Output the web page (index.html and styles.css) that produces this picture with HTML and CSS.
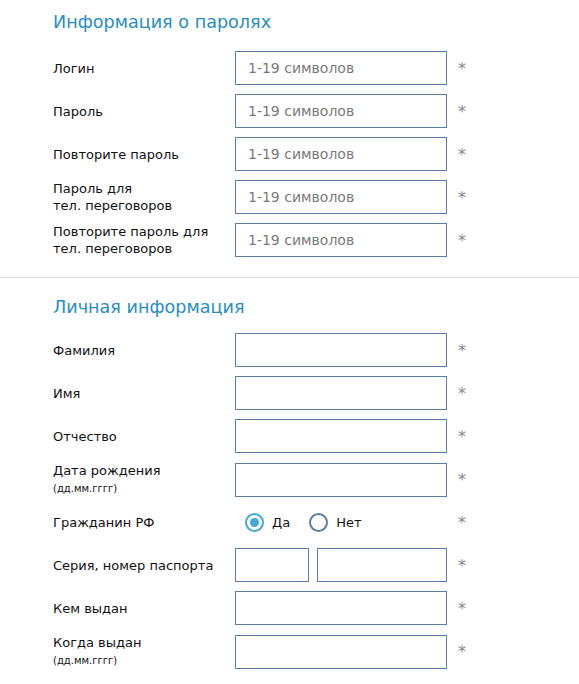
FILE: index.html
```html
<!DOCTYPE html>
<html lang="ru">
<head>
<meta charset="utf-8">
<link rel="stylesheet" href="styles.css">
</head>
<body>
<section class="section first">
  <h2 class="title">Информация о паролях</h2>
  <div class="rows">
    <div class="row"><label class="label">Логин</label><div class="field"><input class="input" placeholder="1-19 символов"></div><span class="req">*</span></div>
    <div class="row"><label class="label">Пароль</label><div class="field"><input class="input" placeholder="1-19 символов"></div><span class="req">*</span></div>
    <div class="row"><label class="label">Повторите пароль</label><div class="field"><input class="input" placeholder="1-19 символов"></div><span class="req">*</span></div>
    <div class="row"><label class="label">Пароль для<br>тел. переговоров</label><div class="field"><input class="input" placeholder="1-19 символов"></div><span class="req">*</span></div>
    <div class="row"><label class="label">Повторите пароль для<br>тел. переговоров</label><div class="field"><input class="input" placeholder="1-19 символов"></div><span class="req">*</span></div>
  </div>
</section>
<hr class="divider">
<section class="section second">
  <h2 class="title">Личная информация</h2>
  <div class="rows">
    <div class="row"><label class="label">Фамилия</label><div class="field"><input class="input"></div><span class="req">*</span></div>
    <div class="row"><label class="label">Имя</label><div class="field"><input class="input"></div><span class="req">*</span></div>
    <div class="row"><label class="label">Отчество</label><div class="field"><input class="input"></div><span class="req">*</span></div>
    <div class="row"><label class="label">Дата рождения<br><span class="hint">(дд.мм.гггг)</span></label><div class="field"><input class="input"></div><span class="req">*</span></div>
    <div class="row"><label class="label">Гражданин РФ</label>
      <div class="field radios">
        <span class="radio"><span class="dot checked"></span>Да</span>
        <span class="radio"><span class="dot"></span>Нет</span>
      </div><span class="req">*</span></div>
    <div class="row"><label class="label">Серия, номер паспорта</label><div class="field split"><input class="input short"><input class="input"></div><span class="req">*</span></div>
    <div class="row"><label class="label">Кем выдан</label><div class="field"><input class="input"></div><span class="req">*</span></div>
    <div class="row"><label class="label">Когда выдан<br><span class="hint">(дд.мм.гггг)</span></label><div class="field"><input class="input"></div><span class="req">*</span></div>
  </div>
</section>
</body>
</html>
```
FILE: styles.css
```css
* { box-sizing: border-box; }
body {
  margin: 0;
  background: #fff;
  font-family: "DejaVu Sans", Verdana, sans-serif;
  color: #111;
}
.section { padding: 0 0 20px 53px; }
.section.first { padding-top: 12px; }
.title {
  margin: 0 0 19px 0;
  font-size: 17.6px;
  font-weight: normal;
  color: #2a8dc0;
  line-height: 20px;
}
.second .title { margin-bottom: 16px; }
.divider {
  border: 0;
  border-top: 1px solid #dcdcdc;
  margin: 0 0 19px 0;
}
.rows { display: flex; flex-direction: column; gap: 9px; }
.row {
  display: grid;
  grid-template-columns: 182px 212px auto;
  align-items: center;
  height: 34px;
}
.label { font-size: 13px; line-height: 17px; }
.hint { font-size: 10px; }
.field { display: flex; height: 34px; }
.input {
  width: 100%;
  height: 34px;
  border: 1px solid #5a7ea5;
  padding: 0 12px;
  font-family: "DejaVu Sans", Verdana, sans-serif;
  font-size: 14px;
  color: #333;
  outline: none;
  background: #fff;
}
.input::placeholder { color: #7a7a7a; }
.split { gap: 8px; }
.split .short { width: 74px; flex: none; }
.radios { align-items: center; gap: 19px; padding-left: 10px; }
.radio { display: flex; align-items: center; gap: 8px; font-size: 13px; }
.dot {
  width: 19px; height: 19px;
  border-radius: 50%;
  border: 2px solid #5a7ea5;
  display: inline-block;
  position: relative;
}
.dot.checked { border-color: #44a8d8; }
.dot.checked::after {
  content: "";
  position: absolute;
  left: 3px; top: 3px;
  width: 9px; height: 9px;
  border-radius: 50%;
  background: #44a8d8;
}
.req { color: #888; font-size: 16px; padding-left: 11px; }
```
